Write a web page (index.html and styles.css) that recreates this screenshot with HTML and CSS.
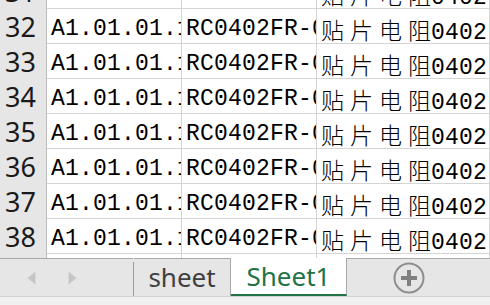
FILE: index.html
```html
<!DOCTYPE html>
<html lang="zh">
<head>
<meta charset="utf-8">
<link rel="stylesheet" href="styles.css">
</head>
<body>
<div class="sheet">
  <div class="grid-wrap">
    <div class="grid">
      <div class="row"><div class="hdr">31</div><div class="cell">A1.01.01.1001</div><div class="cell">RC0402FR-071KL</div><div class="cell"><span class="cjk">贴片电</span><span class="cjk last">阻</span>0402 1K</div></div>
      <div class="row"><div class="hdr">32</div><div class="cell">A1.01.01.1001</div><div class="cell">RC0402FR-071KL</div><div class="cell"><span class="cjk">贴片电</span><span class="cjk last">阻</span>0402 1K</div></div>
      <div class="row"><div class="hdr">33</div><div class="cell">A1.01.01.1001</div><div class="cell">RC0402FR-071KL</div><div class="cell"><span class="cjk">贴片电</span><span class="cjk last">阻</span>0402 1K</div></div>
      <div class="row"><div class="hdr">34</div><div class="cell">A1.01.01.1001</div><div class="cell">RC0402FR-071KL</div><div class="cell"><span class="cjk">贴片电</span><span class="cjk last">阻</span>0402 1K</div></div>
      <div class="row"><div class="hdr">35</div><div class="cell">A1.01.01.1001</div><div class="cell">RC0402FR-071KL</div><div class="cell"><span class="cjk">贴片电</span><span class="cjk last">阻</span>0402 1K</div></div>
      <div class="row"><div class="hdr">36</div><div class="cell">A1.01.01.1001</div><div class="cell">RC0402FR-071KL</div><div class="cell"><span class="cjk">贴片电</span><span class="cjk last">阻</span>0402 1K</div></div>
      <div class="row"><div class="hdr">37</div><div class="cell">A1.01.01.1001</div><div class="cell">RC0402FR-071KL</div><div class="cell"><span class="cjk">贴片电</span><span class="cjk last">阻</span>0402 1K</div></div>
      <div class="row"><div class="hdr">38</div><div class="cell">A1.01.01.1001</div><div class="cell">RC0402FR-071KL</div><div class="cell"><span class="cjk">贴片电</span><span class="cjk last">阻</span>0402 1K</div></div>
      <div class="row"><div class="hdr">39</div><div class="cell">A1.01.01.1001</div><div class="cell">RC0402FR-071KL</div><div class="cell"><span class="cjk">贴片电</span><span class="cjk last">阻</span>0402 1K</div></div>
    </div>
  </div>
  <div class="tabbar">
    <div class="nav">
      <svg class="arrow" width="9" height="14" viewBox="0 0 9 14"><path d="M8.5 0.5V13.5L0.5 7Z" fill="#c6c6c6"/></svg>
      <svg class="arrow" width="9" height="14" viewBox="0 0 9 14"><path d="M0.5 0.5V13.5L8.5 7Z" fill="#c6c6c6"/></svg>
    </div>
    <div class="sep"></div>
    <div class="tab">sheet</div>
    <div class="tab active">Sheet1</div>
    <div class="add">
      <svg width="32" height="32" viewBox="0 0 32 32"><circle cx="16" cy="16" r="14.5" fill="none" stroke="#8e8e8e" stroke-width="2"/><path d="M16 8V24M8 16H24" stroke="#808080" stroke-width="4"/></svg>
    </div>
  </div>
  <div class="footer"></div>
</div>
</body>
</html>
```

FILE: styles.css
```css
html, body {
  margin: 0;
  padding: 0;
}
body {
  width: 490px;
  height: 305px;
  overflow: hidden;
  background: #ffffff;
}
.sheet {
  display: flex;
  flex-direction: column;
  width: 490px;
  height: 305px;
}
.grid-wrap {
  height: 258px;
  overflow: hidden;
  background: #ffffff;
  flex: none;
}
.grid {
  margin-top: -26px;
}
.row {
  display: grid;
  grid-template-columns: 47px 135px 135px 1fr;
  height: 35px;
}
.hdr {
  background: #e6e6e6;
  border-right: 1px solid #bdbdbd;
  border-bottom: 1px solid #d0d0d0;
  font-family: "Noto Sans", "Open Sans", sans-serif;
  font-size: 27px;
  line-height: 34px;
  padding-top: 1px;
  box-sizing: border-box;
  color: #1a1a1a;
  text-align: center;
  padding-right: 5px;
}
.cell {
  border-right: 1px solid #d4d4d4;
  border-bottom: 1px solid #d4d4d4;
  font-family: "Liberation Mono", "DejaVu Sans Mono", monospace;
  font-size: 23px;
  letter-spacing: 0.2px;
  line-height: 30px;
  padding-top: 5px;
  padding-left: 4px;
  box-sizing: border-box;
  height: 35px;
  white-space: nowrap;
  overflow: hidden;
  color: #000000;
}
.cjk {
  font-family: "Noto Sans CJK SC", sans-serif;
  font-size: 23px;
  font-weight: 300;
  letter-spacing: 6px;
}
.cjk.last {
  letter-spacing: 0;
}
.tabbar {
  display: flex;
  height: 38px;
  flex: none;
  background: #e6e6e6;
}
.nav {
  width: 133px;
  border-top: 1px solid #a9a9a9;
  display: flex;
  align-items: center;
  gap: 32px;
  padding-left: 27px;
  box-sizing: border-box;
}
.sep {
  width: 1px;
  margin-top: 4px;
  background: #9c9c9c;
}
.tab {
  border-top: 1px solid #a9a9a9;
  border-right: 1px solid #a9a9a9;
  display: flex;
  align-items: center;
  justify-content: center;
  font-family: "Noto Sans", "Open Sans", sans-serif;
  font-size: 26px;
  color: #3f3f3f;
  width: 97px;
  box-sizing: border-box;
  padding-bottom: 2px;
}
.tab.active {
  width: 116px;
  border-top: none;
  background: #ffffff;
  color: #217346;
  border-bottom: 2px solid #217346;
  padding-bottom: 0;
}
.add {
  flex: 1;
  border-top: 1px solid #a9a9a9;
  display: flex;
  align-items: center;
  padding-left: 46px;
}
.footer {
  flex: 1;
  background: #f1f1f1;
  border-top: 1px solid #d2d2d2;
}
```
